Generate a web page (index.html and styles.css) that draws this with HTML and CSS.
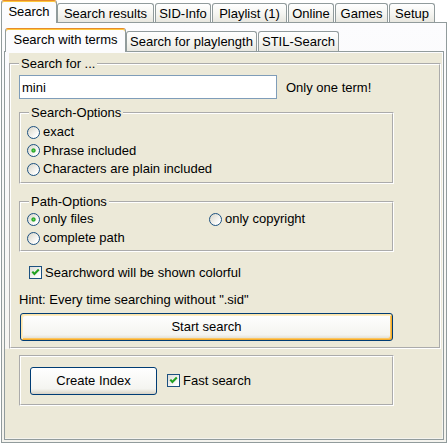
FILE: index.html
```html
<!DOCTYPE html>
<html>
<head>
<meta charset="utf-8">
<link rel="stylesheet" href="styles.css">
</head>
<body>
<div class="app">
  <div class="tabs outer-tabs">
    <div class="tab sel">Search</div>
    <div class="tab">Search results</div>
    <div class="tab">SID-Info</div>
    <div class="tab">Playlist (1)</div>
    <div class="tab">Online</div>
    <div class="tab">Games</div>
    <div class="tab">Setup</div>
  </div>
  <div class="outer-page">
    <div class="tabs inner-tabs">
      <div class="tab sel">Search with terms</div>
      <div class="tab">Search for playlength</div>
      <div class="tab">STIL-Search</div>
    </div>
    <div class="inner-page">
      <div class="search-wrap">
        <fieldset class="gb gb-main">
          <legend>Search for ...</legend>
          <div class="term-row">
            <input class="edit" type="text" value="mini">
            <span class="note">Only one term!</span>
          </div>
          <fieldset class="gb gb-sub gb-opts">
            <legend>Search-Options</legend>
            <div class="opt"><span class="radio"></span>exact</div>
            <div class="opt"><span class="radio on"></span>Phrase included</div>
            <div class="opt"><span class="radio"></span>Characters are plain included</div>
          </fieldset>
          <fieldset class="gb gb-sub gb-path">
            <legend>Path-Options</legend>
            <div class="path-grid">
              <div class="opt"><span class="radio on"></span>only files</div>
              <div class="opt"><span class="radio"></span>only copyright</div>
              <div class="opt"><span class="radio"></span>complete path</div>
            </div>
          </fieldset>
          <div class="check-row colorful">
            <span class="check"><svg viewBox="0 0 11 11"><polyline points="2.3,4.6 4.4,7 8.8,2.4" fill="none" stroke="#21a121" stroke-width="2.1"/></svg></span>Searchword will be shown colorful
          </div>
          <div class="hint">Hint: Every time searching without ".sid"</div>
          <button class="btn default start">Start search</button>
        </fieldset>
      </div>
      <div class="index-panel">
        <fieldset class="gb gb-index">
          <button class="btn create">Create Index</button>
          <div class="check-row">
            <span class="check"><svg viewBox="0 0 11 11"><polyline points="2.3,4.6 4.4,7 8.8,2.4" fill="none" stroke="#21a121" stroke-width="2.1"/></svg></span>Fast search
          </div>
        </fieldset>
      </div>
    </div>
  </div>
</div>
</body>
</html>
```
FILE: styles.css
```css
* { box-sizing: border-box; }
html, body { margin: 0; padding: 0; background: #fff; }
body {
  width: 448px;
  height: 444px;
  overflow: hidden;
  font-family: "Liberation Sans", Arial, sans-serif;
  font-size: 13px;
  line-height: 16px;
  color: #000;
}
.app { padding-left: 1px; }

/* tabs */
.tabs { display: flex; align-items: flex-end; position: relative; z-index: 1; }
.outer-tabs { height: 22px; }
.tab {
  height: 19px;
  margin-right: 1px;
  padding-top: 2px;
  text-align: center;
  white-space: nowrap;
  border: 1px solid #919b9c;
  border-bottom: 0;
  border-radius: 3px 3px 0 0;
  background: linear-gradient(#ffffff, #f5f5f1 55%, #e8e7e0);
}
.tab.sel {
  height: 23px;
  margin-right: 0;
  margin-bottom: -1px;
  padding-top: 3px;
  border-top-color: #e68b2c;
  background: #fcfcfe;
  box-shadow: inset 0 1px 0 #ffc73c;
}
.outer-tabs .tab:nth-child(1) { width: 56px; }
.outer-tabs .tab:nth-child(2) { width: 97px; }
.outer-tabs .tab:nth-child(3) { width: 56px; }
.outer-tabs .tab:nth-child(4) { width: 75px; }
.outer-tabs .tab:nth-child(5) { width: 46px; }
.outer-tabs .tab:nth-child(6) { width: 53px; }
.outer-tabs .tab:nth-child(7) { width: 46px; }

.outer-page {
  width: 446px;
  height: 421px;
  border: 1px solid #919b9c;
  background: linear-gradient(#fcfcfe, #f4f3ee);
  padding: 5px 2px 2px 2px;
  display: flex;
  flex-direction: column;
}
.inner-tabs { height: 23px; padding-left: 1px; }
.inner-tabs .tab { height: 20px; }
.inner-tabs .tab.sel { height: 24px; }
.inner-tabs .tab:nth-child(1) { width: 121px; }
.inner-tabs .tab:nth-child(2) { width: 131px; }
.inner-tabs .tab:nth-child(3) { width: 81px; }

.inner-page {
  flex: 1;
  border: 1px solid #919b9c;
  background: linear-gradient(#fcfcfe, #f4f3ee);
  padding: 1px 1px 1px 0;
  display: flex;
  flex-direction: column;
}

/* group boxes */
.gb {
  margin: 0;
  min-width: 0;
  border: 2px groove #fff;
}
.gb legend { padding: 0 2px; line-height: 16px; }
.search-wrap {
  margin-left: 4px;
  background: #ece9d8;
  padding-top: 3px;
}
.gb-main {
  margin-right: 1px;
  padding: 3px 0 6.5px 8px;
}
.term-row { display: flex; align-items: center; }
.edit {
  width: 258px;
  height: 24px;
  margin: 0;
  border: 1px solid #7f9db9;
  padding: 0 2px;
  font: inherit;
  color: #000;
  background: #fff;
  outline: none;
}
.note { margin-left: 9px; margin-top: 2px; }

.gb-sub { width: 375px; }
.gb-sub legend { margin-left: 2px; }
.gb-opts { margin-top: 6px; padding: 2px 0 3px 6px; }
.gb-path { margin-top: 10px; padding: 0 0 2px 6px; }
.path-grid { display: grid; grid-template-columns: 182px auto; }

.opt { display: flex; align-items: center; height: 18.5px; white-space: nowrap; }
.path-grid .opt { height: 19px; }
.radio {
  flex: none;
  width: 13px;
  height: 13px;
  margin-right: 3px;
  border-radius: 50%;
  border: 1px solid #1c5180;
  background: linear-gradient(135deg, #d8d5c8, #ffffff 80%);
}
.radio.on {
  background:
    radial-gradient(circle at 50% 50%, #63d65e 0, #21a121 1.6px, rgba(33,161,33,0) 2.6px),
    linear-gradient(135deg, #d8d5c8, #ffffff 80%);
}

.check-row { display: flex; align-items: center; height: 18px; white-space: nowrap; }
.colorful { margin: 12px 0 0 10px; }
.check {
  flex: none;
  width: 13px;
  height: 13px;
  margin-right: 3px;
  border: 1px solid #1c5180;
  background: linear-gradient(135deg, #dcdcd7, #ffffff 85%);
  display: flex;
}
.check svg { width: 11px; height: 11px; display: block; }

.hint { margin-top: 10px; }

.btn {
  display: block;
  height: 28px;
  padding: 0;
  border: 1px solid #003c74;
  border-radius: 3px;
  background: linear-gradient(#ffffff, #f4f4f0 80%, #e4e1d6 92%, #d6d0c5);
  font: inherit;
  color: #000;
  text-align: center;
}
.start { width: 373px; margin: 5px 0 0 1px; }
.btn.default {
  box-shadow:
    inset 1px 1px 0 #fee4a8,
    inset -1px -1px 0 #f5ac2c,
    inset 2px 2px 0 #fdedc4,
    inset -2px -2px 0 #fbc661;
}

.index-panel {
  flex: 1;
  background: #ece9d8;
  padding: 6px 0 0 14px;
}
.gb-index {
  width: 375px;
  height: 51px;
  padding: 0 0 0 9px;
  display: flex;
  align-items: center;
}
.create { width: 127px; margin: 0; }
.gb-index .check-row { margin-left: 10px; }
```
